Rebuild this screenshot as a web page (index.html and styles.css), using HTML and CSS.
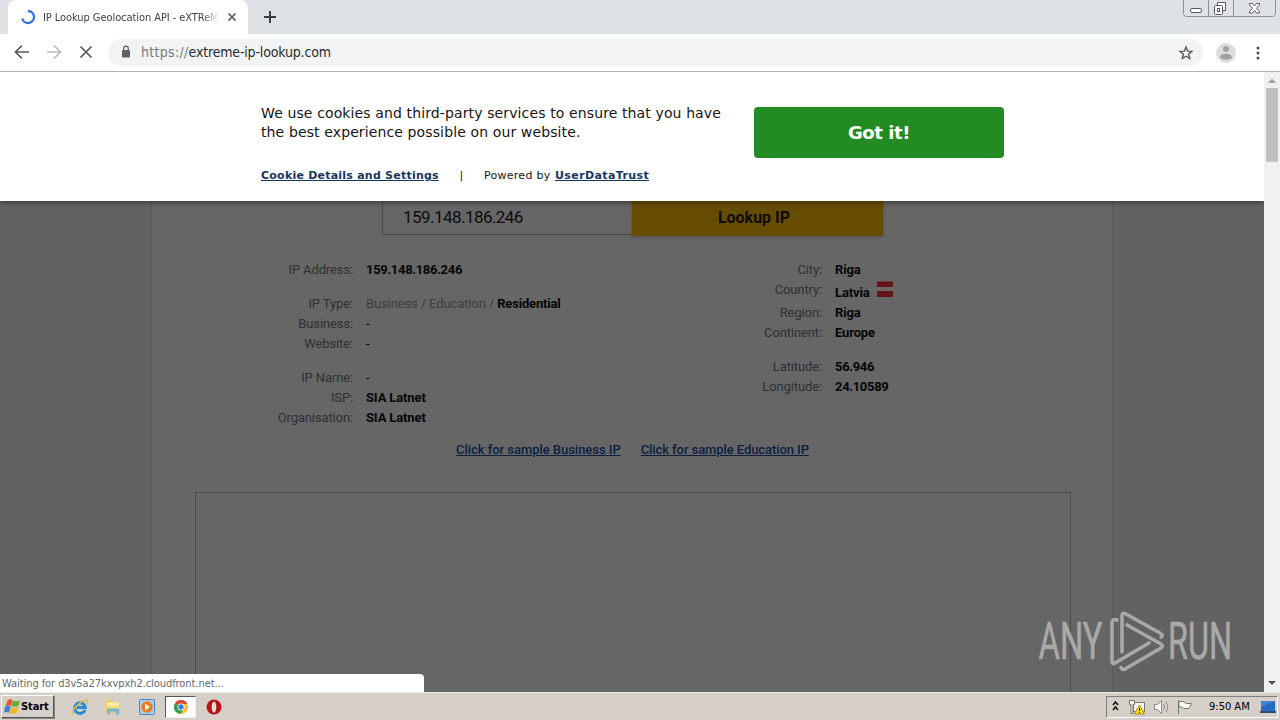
FILE: index.html
```html
<!DOCTYPE html>
<html lang="en">
<head>
<meta charset="utf-8">
<title>IP Lookup Geolocation API</title>
<link rel="stylesheet" href="styles.css">
</head>
<body>
<div class="screen">
  <header class="tabstrip">
    <div class="tab">
      <svg class="spinner" width="16" height="16" viewBox="0 0 16 16"><path d="M8 2A6 6 0 1 1 2.200 9.500" fill="none" stroke="#2f6fd6" stroke-width="2.300"/></svg>
      <span class="tab-title">IP Lookup Geolocation API - eXTReM</span>
      <svg class="tab-close" width="10" height="10" viewBox="0 0 10 10"><path d="M1.500 1.500l7 7M8.500 1.500l-7 7" stroke="#55585c" stroke-width="1.700"/></svg>
    </div>
    <svg class="newtab" width="14" height="14" viewBox="0 0 14 14"><path d="M7 1v12M1 7h12" stroke="#3c4043" stroke-width="2"/></svg>
    <svg class="winbtns" width="94" height="18" viewBox="0 0 94 18" fill="none">
      <path d="M.5 0v13.500q0 3 3 3h86q3 0 3-3V0M25.500 0v16M50.500 0v16" stroke="#8b909b"/>
      <g stroke="#55585f"><rect x="7.500" y="8.500" width="11" height="4" rx="1.500" fill="#fff"/>
      <path d="M34.500 5.500v-3h8v8h-3" fill="#fff"/><rect x="31.500" y="5.500" width="8" height="9" rx="1" fill="#fff"/><rect x="34.500" y="8.500" width="2" height="3"/>
      <path d="M66.500 3.500h3l2 2.500 2-2.500h3v1.500l-3 3.200 3 3.300v1.500h-3l-2-2.500-2 2.500h-3v-1.500l3-3.300-3-3.200z" fill="#fff"/></g>
    </svg>
  </header>
  <nav class="toolbar">
    <svg width="100" height="37" viewBox="0 0 100 37" fill="none">
      <path d="M29 18H16M22 11.500L15.500 18l6.500 6.500" stroke="#55585c" stroke-width="1.700"/>
      <path d="M47 18h13M54 11.500l6.500 6.500-6.500 6.500" stroke="#b9bbbe" stroke-width="1.700"/>
      <path d="M80.500 12.500l11 11M91.500 12.500l-11 11" stroke="#55585c" stroke-width="1.700"/>
    </svg>
    <div class="omnibox">
      <svg class="lock" width="10" height="14" viewBox="0 0 10 14"><rect x="1" y="5" width="8" height="7.500" rx="1" fill="#5f6368"/><path d="M2.700 6V3.500a2.300 2.300 0 0 1 4.600 0V6" fill="none" stroke="#5f6368" stroke-width="1.300"/></svg>
      <span class="url"><span class="scheme">https://</span>extreme-ip-lookup.com</span>
      <svg class="star" width="16" height="16" viewBox="0 0 16 16"><path d="M8 2.100l1.600 4 4.300.3-3.300 2.800 1.100 4.300L8 11.200l-3.700 2.300 1.100-4.300-3.300-2.800 4.300-.3z" fill="none" stroke="#55585c" stroke-width="1.400"/></svg>
    </div>
    <svg class="avatar" width="20" height="20" viewBox="0 0 20 20"><circle cx="10" cy="10" r="10" fill="#dcdcdc"/><circle cx="10" cy="6" r="3" fill="#a0a0a0"/><ellipse cx="10" cy="13.800" rx="6" ry="3" fill="#a0a0a0"/></svg>
    <svg class="dots" width="4" height="14" viewBox="0 0 4 14" fill="#4b4e52"><circle cx="2" cy="2" r="1.500"/><circle cx="2" cy="7" r="1.500"/><circle cx="2" cy="12" r="1.500"/></svg>
  </nav>

  <div class="viewport">
    <main class="page">
      <section class="cookie">
        <div class="cookie-text">
          <p>We use cookies and third-party services to ensure that you have<br>the best experience possible on our website.</p>
          <div class="cookie-links"><a class="details">Cookie Details and Settings</a><span class="bar">|</span><span class="powered">Powered by</span><a class="trust">UserDataTrust</a></div>
        </div>
        <div class="gotit">Got it!</div>
      </section>
      <section class="content">
        <div class="form"><div class="ip-input">159.148.186.246</div><div class="lookup">Lookup IP</div></div>
        <div class="info">
          <dl class="left">
            <dt>IP Address:</dt><dd class="num">159.148.186.246</dd>
            <dt class="gap">IP Type:</dt><dd class="gap"><span class="off">Business / Education / </span><span class="res">Residential</span></dd>
            <dt>Business:</dt><dd class="none">-</dd>
            <dt>Website:</dt><dd class="none">-</dd>
            <dt class="gap">IP Name:</dt><dd class="gap none">-</dd>
            <dt>ISP:</dt><dd>SIA Latnet</dd>
            <dt>Organisation:</dt><dd>SIA Latnet</dd>
          </dl>
          <dl class="right">
            <dt>City:</dt><dd>Riga</dd>
            <dt>Country:</dt><dd class="country">Latvia <svg width="18" height="17" viewBox="0 0 18 17"><rect x=".5" width="17" height="17" rx="2" fill="#6c6666"/><path d="M2 .5h14q1 0 1 1V6H1V1.500q0-1 1-1zM1 10h16v5q0 1-1 1H2q-1 0-1-1z" fill="#641316"/></svg></dd>
            <dt>Region:</dt><dd>Riga</dd>
            <dt>Continent:</dt><dd>Europe</dd>
            <dt class="gap">Latitude:</dt><dd class="gap num">56.946</dd>
            <dt>Longitude:</dt><dd class="num">24.10589</dd>
          </dl>
        </div>
        <div class="samples"><a class="s1">Click for sample Business IP</a><a class="s2">Click for sample Education IP</a></div>
        <div class="map"></div>
      </section>
    </main>
    <aside class="scrollbar">
      <svg width="16" height="16" viewBox="0 0 16 16"><path d="M4 11l4-4.500 4 4.500z" fill="#9d9d9d"/></svg>
      <div class="thumb"></div>
      <svg class="down" width="16" height="16" viewBox="0 0 16 16"><path d="M4 6l4 4 4-4z" fill="#505050"/></svg>
    </aside>
    <div class="status">Waiting for d3v5a27kxvpxh2.cloudfront.net...</div>
    <div class="watermark" aria-label="ANY RUN">
      <svg width="210" height="76" viewBox="0 0 210 76">
        <g class="mark-text"><text x="2.500" y="57" textLength="64" lengthAdjust="spacingAndGlyphs">ANY</text><text x="132" y="57" textLength="64" lengthAdjust="spacingAndGlyphs">RUN</text></g>
        <g fill="none" stroke="#a9a9a9" stroke-width="3.600" stroke-linejoin="round" stroke-linecap="round">
          <path d="M81 18q-5-2-5 3v38q0 4 3 2l34-20"/>
          <path d="M86 50V14q0-4 4-2l34 19q4 2 1 4"/>
          <path d="M91 23l34 19q3 2 0 4L89 67q-3 1.500-4-1.500"/>
        </g>
      </svg>
    </div>
  </div>

  <footer class="taskbar">
    <div class="start">
      <svg width="17" height="18" viewBox="0 0 17 18"><path d="M3.500 2.500q2.500-2 5-.5L7 8Q4.500 6.500 1.500 8z" fill="#e4572e"/><path d="M9 2.500q3 1.500 7 0L14.500 8q-3.500 1.500-7 0z" fill="#69ac3a"/><path d="M1.200 8.500q3-1.500 5.500 0L5 15Q3 13.500 0 14.500z" fill="#3c82cf"/><path d="M7.200 9q3 1.500 7 0l-1.700 6q-3.500 1.500-7 0z" fill="#f1b722"/></svg>
      <span>Start</span>
    </div>
    <svg class="q ie" width="18" height="18" viewBox="0 0 18 18"><path d="M14 12A5.300 5.300 0 1 1 14.300 9.500H6" fill="none" stroke="#278bd5" stroke-width="3"/><path d="M2.500 16.500Q0 14 5 8.500T16 2q1.500 1-.5 4" fill="none" stroke="#e6b73d" stroke-width="1.300"/></svg>
    <svg class="q folder" width="16" height="18" viewBox="0 0 16 18"><path d="M1 2h5l1 2h8v11H1z" fill="#efc95a"/><path d="M2 4.500h12v5H2z" fill="#fff1af"/><path d="M1 7.500h14v4H1z" fill="#f4d974"/><path d="M2 10.500h12v6h-3v-3H5v3H2z" fill="#6fb7dd"/></svg>
    <svg class="q media" width="16" height="18" viewBox="0 0 16 18"><rect x=".5" y="1.500" width="15" height="15" rx="1" fill="#a8cfee" stroke="#4a86bc"/><circle cx="8" cy="9" r="5.700" fill="#ee7a16"/><path d="M6 5.500l5 3.500-5 3.500z" fill="#fff"/></svg>
    <div class="active"><svg width="16" height="16" viewBox="0 0 16 16"><circle cx="8" cy="8" r="7" fill="#f3c22d"/><path d="M8 8L2 4.300A7 7 0 0 1 14.300 5H8z" fill="#dc4638"/><path d="M2 4.300A7 7 0 0 0 7.500 15l3-5.500L8 8z" fill="#2ba14d"/><circle cx="8" cy="8" r="3.500" fill="#fff"/><circle cx="8" cy="8" r="2.700" fill="#407be2"/></svg></div>
    <svg class="q opera" width="16" height="16" viewBox="0 0 16 16"><circle cx="8" cy="8" r="7.500" fill="#b81418"/><ellipse cx="8" cy="8" rx="2.300" ry="5.500" fill="#e5dcd8"/></svg>
    <div class="tray">
      <svg width="92" height="20" viewBox="0 0 92 20">
        <path d="M6 8l2.500-3L11 8M6 13l2.500-3 2.500 3" fill="none" stroke="#111" stroke-width="1.500"/>
        <g fill="#f5f5f0" stroke="#77776f"><rect x="26.500" y="5.500" width="11" height="9"/><path d="M22.500 3.500h5v4h-1.500v9h-2v-9h-1.500z"/></g>
        <path d="M32.500 8l5 9h-10z" fill="#f7d92b" stroke="#a38e14"/><path d="M32.500 11v3M32.500 15v1" stroke="#222"/>
        <g fill="none" stroke="#8c8c86"><path d="M47.500 7.500h3l4-4v13l-4-4h-3z" fill="#fff"/><path d="M56.500 7q2 3 0 6M59 5q3.500 5 0 10"/></g>
        <path d="M71.500 17V3.500M72 4.500h5q1 2 2.500 2h5l-2.500 5h-5q-1-2-5-1.500z" fill="#fff" stroke="#77776f"/>
      </svg>
      <span class="clock">9:50 AM</span>
      <svg class="desk" width="16" height="14" viewBox="0 0 16 14"><path d="M1 1h14v10H1z" fill="#2869c4"/><path d="M1 1h14L1 7z" fill="#4583d3"/><path d="M0 11h16v2H0z" fill="#304b72"/></svg>
    </div>
  </footer>
</div>
</body>
</html>
```
FILE: styles.css
```css
* { box-sizing: border-box; }
body { margin: 0; overflow: hidden; }
p, dl, dd { margin: 0; }
.screen { width: 1280px; height: 720px; display: flex; flex-direction: column; font-family: "DejaVu Sans Condensed", "DejaVu Sans", sans-serif; background: #fff; }

.tabstrip { height: 34px; background: #dee1e6; display: flex; align-items: center; padding-left: 8px; }
.tab { width: 240px; height: 34px; background: #fff; border-radius: 8px 8px 0 0; display: flex; align-items: center; padding-left: 12px; }
.tab-title { width: 176px; margin-left: 7px; white-space: nowrap; font-size: 11px; letter-spacing: -.07px; color: #3f4245; -webkit-mask-image: linear-gradient(90deg, #000 91%, transparent); mask-image: linear-gradient(90deg, #000 91%, transparent); }
.tab-close { margin-left: 8px; }
.newtab { margin-left: 15px; }
.winbtns { margin: 0 3px 0 auto; align-self: flex-start; }

.toolbar { height: 38px; border-bottom: 1px solid #b1b3b5; display: flex; align-items: center; }
.omnibox { width: 1095px; height: 27px; margin-left: 8px; border-radius: 14px; background: #f1f3f4; display: flex; align-items: center; padding: 0 9px 0 13px; }
.lock { margin-bottom: 1px; }
.url { margin-left: 10px; padding-bottom: 2px; font-size: 14px; letter-spacing: -.17px; color: #292b2e; }
.scheme { color: #777b80; letter-spacing: .3px; }
.star { margin-left: auto; }
.avatar { margin-left: 13px; }
.dots { margin-left: 20px; }

.viewport { height: 620px; display: flex; position: relative; }
.page { width: 1264px; background: #626262; display: flex; flex-direction: column; overflow: hidden; }
.cookie { height: 129px; flex: none; background: #fff; padding: 32px 0 0 261px; display: flex; position: relative; box-shadow: 0 1px 6px rgba(0,0,0,.5); font-family: "DejaVu Sans", sans-serif; color: #151515; }
.cookie-text { width: 493px; }
.cookie p { font-size: 14px; line-height: 19px; letter-spacing: .12px; white-space: nowrap; }
.cookie-links { display: flex; margin-top: 27px; font-size: 11px; line-height: 14px; white-space: nowrap; }
.cookie a { font-weight: bold; color: #17365f; text-decoration: underline; }
.details { width: 178px; letter-spacing: .23px; }
.bar { margin-left: 20.500px; width: 24.500px; }
.powered { letter-spacing: .27px; width: 67px; }
.trust { margin-left: 4px; letter-spacing: .4px; }
.gotit { width: 250px; height: 51px; margin-top: 3px; border-radius: 4px; background: #228b22; color: #fff; font-size: 18px; font-weight: bold; letter-spacing: -.4px; line-height: 51px; text-align: center; }

.content { width: 960px; flex: 1; margin-left: 152px; background: #666; box-shadow: 0 0 3px rgba(0,0,0,.2); font-family: Roboto, sans-serif; font-size: 13px; color: #0c0c0c; }
.form { height: 35px; margin-left: 230px; display: flex; font-size: 17px; line-height: 33px; }
.ip-input { width: 250px; border: solid #474747; border-width: 0 0 1px 1px; padding-left: 20px; height: 34px; letter-spacing: -.55px; }
.lookup { width: 251px; background: #664c00; text-align: center; padding-right: 7px; font-weight: bold; font-size: 16px; box-shadow: 0 1px 3px rgba(0,0,0,.25); }
.info { display: flex; margin-top: 24px; height: 168px; line-height: 20px; white-space: nowrap; }
dl { display: grid; grid-template-columns: 201px 260px; column-gap: 13px; align-content: start; }
.right { grid-template-columns: 196px 100px; }
dt { text-align: right; color: #303030; letter-spacing: -.12px; }
dd { font-weight: bold; color: #050505; letter-spacing: -.13px; }
.num { letter-spacing: -.32px; }
.none { font-weight: normal; }
.gap { margin-top: 14px; }
.off { font-weight: normal; color: #3d3d3d; letter-spacing: -.12px; }
.res { letter-spacing: -.18px; }
.country { height: 23px; display: flex; gap: 6.500px; line-height: 26px; }
.country svg { margin-top: 1px; }
.samples { display: flex; gap: 20px; margin: 12px 0 0 304px; line-height: 20px; font-weight: 500; white-space: nowrap; }
.samples a { color: #0a1f42; text-decoration: underline; letter-spacing: -.04px; }
.samples .s2 { letter-spacing: -.08px; }
.map { width: 876px; height: 240px; margin: 32px 0 0 43px; border: 1px solid #4a4a4a; }

.scrollbar { width: 16px; background: #f1f1f1; display: flex; flex-direction: column; }
.thumb { width: 12px; height: 74px; margin-left: 2px; background: #c1c1c1; }
.down { margin-top: auto; margin-bottom: 1px; }
.status { position: absolute; left: 0; bottom: 0; width: 424px; height: 18px; background: #fff; border-radius: 0 4px 0 0; padding-left: 2px; font-size: 11px; line-height: 19px; letter-spacing: -.07px; color: #686868; }
.watermark { position: absolute; left: 1036px; top: 530px; width: 210px; height: 76px; }
.mark-text { font: 51px "Roboto", sans-serif; fill: #a9a9a9; stroke: #a9a9a9; stroke-width: .6px; }

.taskbar { height: 28px; background: #d5cfc7; border-top: 1px solid #eeebe6; display: flex; align-items: center; }
.start { width: 53px; height: 23px; margin-left: 1px; border: 1px solid; border-color: #fff #555 #555 #fff; box-shadow: 1px 1px 0 #888; display: flex; align-items: center; padding-left: 2px; font-size: 11px; font-weight: bold; color: #000; }
.start span { letter-spacing: -.1px; }
.q { flex: none; }
.ie { margin-left: 17px; }
.folder { margin-left: 16px; }
.media { margin-left: 18px; }
.active { width: 31px; height: 22px; margin-left: 10px; background: #fff; border: 1px solid; border-color: #555 #eee #eee #555; display: flex; align-items: center; justify-content: center; }
.opera { margin-left: 10px; }
.tray { width: 172px; height: 22px; margin: 0 2px 0 auto; border: 1px solid; border-color: #808080 #fff #fff #808080; display: flex; align-items: center; font-size: 11px; color: #000; }
.clock { margin-left: 10px; width: 51px; letter-spacing: 0; white-space: nowrap; }
```
